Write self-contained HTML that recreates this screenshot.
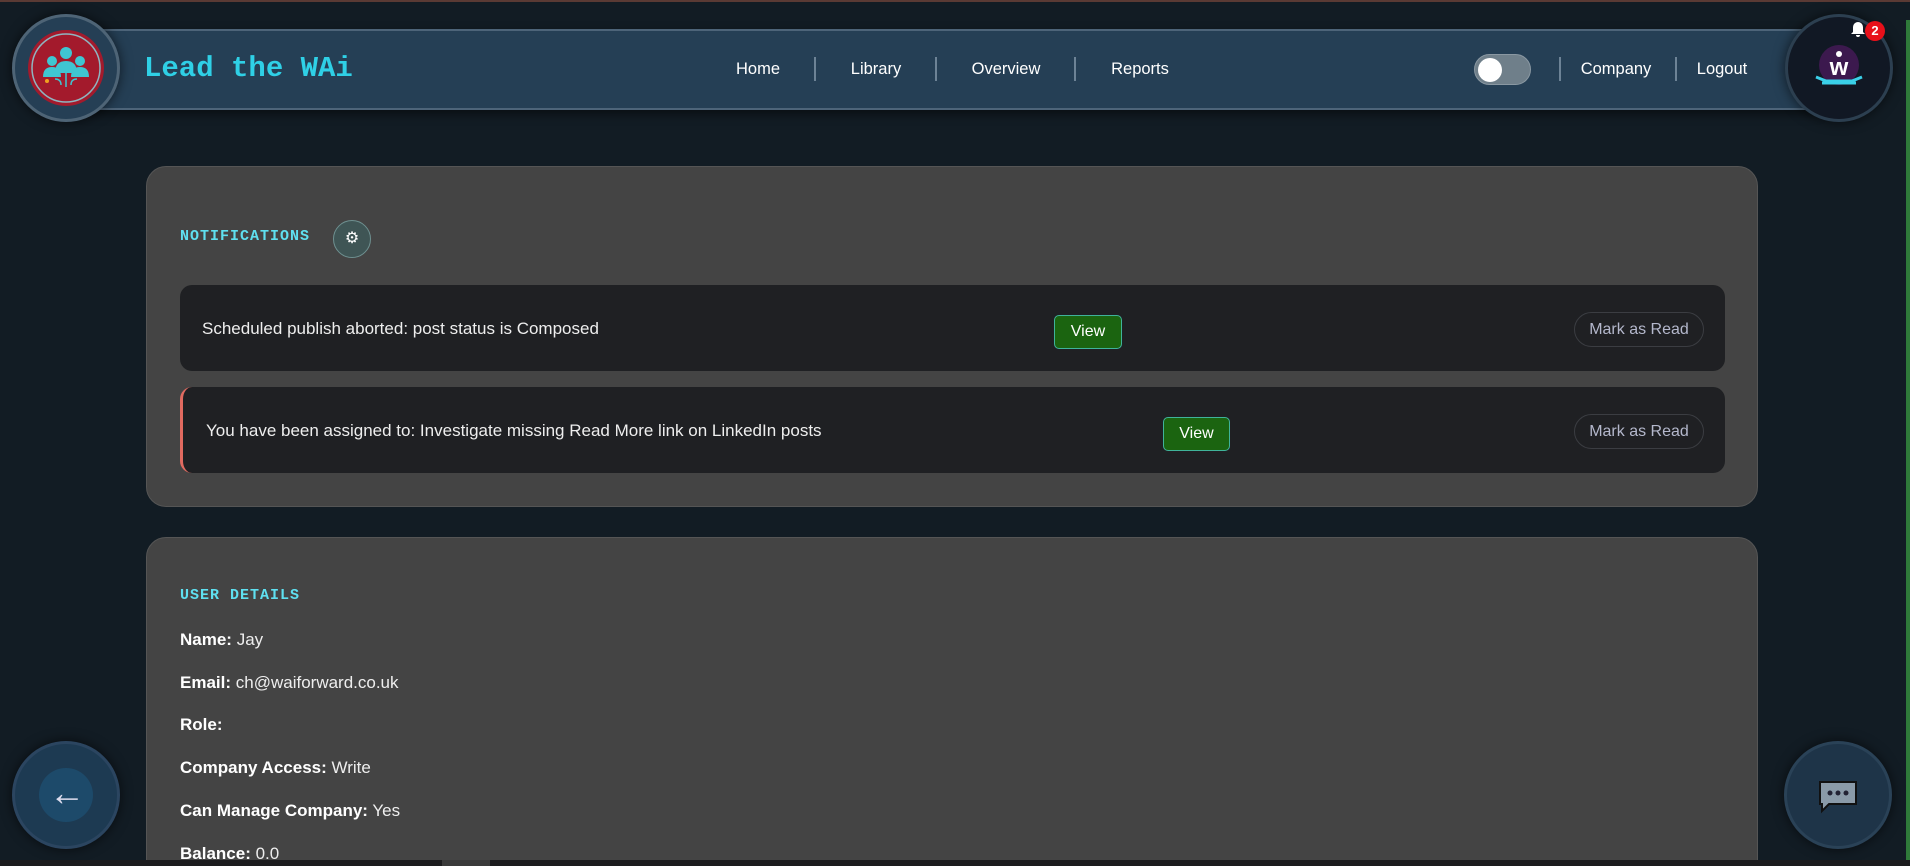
<!DOCTYPE html>
<html style="overflow:hidden;width:1910px;height:866px"><head><meta charset="utf-8"><style>
*{box-sizing:border-box;margin:0;padding:0}
body{width:1910px;height:866px;overflow:hidden;background:#121c24;font-family:"Liberation Sans",Arial,sans-serif;position:relative;color:#eee}
.topline{position:absolute;left:0;top:0;width:1910px;height:2px;background:#5a3a34}
.greenline{position:absolute;right:0;top:20px;width:4px;height:840px;background:#2f7a3a}
.bar{position:absolute;left:80px;top:29px;width:1740px;height:81px;background:#253f55;border:2px solid #4d6479;border-radius:6px;box-shadow:0 4px 10px rgba(0,0,0,.5)}
.circ{position:absolute;width:108px;height:108px;border-radius:50%;background:#253f55;border:3px solid #4e6476;box-shadow:0 0 12px rgba(0,0,0,.6)}
.title{position:absolute;left:144px;top:52px;font-family:"Liberation Mono",monospace;font-weight:bold;font-size:29px;color:#2fd0e6}
.nav{position:absolute;top:60px;font-size:16.5px;color:#fff;transform:translateX(-50%)}
.sep{position:absolute;top:57px;width:2px;height:24px;background:#6d8396}
.toggle{position:absolute;left:1474px;top:54px;width:57px;height:31px;border-radius:16px;background:#6f7f8a;border:1px solid #8a98a2}
.toggle:after{content:"";position:absolute;left:3px;top:3px;width:24px;height:24px;border-radius:50%;background:#fff}
.card{position:absolute;left:146px;width:1612px;background:#444;border-radius:20px;border:1px solid #555;overflow:hidden}
.h{font-family:"Liberation Mono",monospace;font-weight:bold;font-size:15px;color:#5fe0f0;letter-spacing:1px;position:absolute}
.row{position:absolute;left:180px;width:1545px;background:#1f2023;border-radius:12px;height:86px}
.row .t{position:absolute;left:22px;top:33px;font-size:17px;color:#eee}
.view{position:absolute;height:34px;border-radius:5px;background:#1b6410;border:1px solid #3fb39a;color:#fff;font-size:16px;text-align:center;line-height:32px}
.mark{position:absolute;left:1394px;width:130px;height:35px;border-radius:18px;border:1px solid #3b3d42;color:#b4b8cc;font-size:16px;text-align:center;line-height:33px}
.d{position:absolute;left:180px;font-size:17px;color:#eee}
.d b{color:#fff}
</style></head><body>
<div class="topline"></div><div class="greenline"></div>
<div class="bar"></div>
<div class="circ" style="left:12px;top:14px">
<svg width="102" height="102" viewBox="0 0 102 102"><circle cx="51" cy="51" r="38" fill="#a31a2c"/><circle cx="51" cy="51" r="34" fill="none" stroke="#8fb5c0" stroke-width="1.5"/>
<g fill="#3fc6d2"><circle cx="51" cy="36" r="6"/><path d="M40 56q0-12 11-12t11 12z"/><circle cx="37" cy="44" r="5"/><path d="M28 60q0-10 9-10t9 10z"/><circle cx="65" cy="44" r="5"/><path d="M56 60q0-10 9-10t9 10z"/></g>
<path d="M51 56v14M40 62q6 0 6 6M62 62q-6 0-6 6" stroke="#3fc6d2" fill="none" stroke-width="1.5"/><circle cx="32" cy="64" r="2" fill="#f0a020"/></svg></div>
<div class="title">Lead the WAi</div>
<div class="nav" style="left:758px">Home</div><div class="sep" style="left:814px"></div>
<div class="nav" style="left:876px">Library</div><div class="sep" style="left:935px"></div>
<div class="nav" style="left:1006px">Overview</div><div class="sep" style="left:1074px"></div>
<div class="nav" style="left:1140px">Reports</div>
<div class="toggle"></div>
<div class="sep" style="left:1559px"></div>
<div class="nav" style="left:1616px">Company</div><div class="sep" style="left:1675px"></div>
<div class="nav" style="left:1722px">Logout</div>
<div class="circ" style="left:1785px;top:14px;background:#111824;border-color:#2c3f50">
<svg width="102" height="102" viewBox="0 0 102 102"><circle cx="51" cy="48" r="20" fill="#5a1a6a" opacity=".6"/><text x="51" y="58" font-family="Liberation Sans" font-weight="bold" font-size="24" fill="#fff" text-anchor="middle">w</text><circle cx="51" cy="37" r="3" fill="#fff"/><path d="M28 60l10 4h26l10-4M34 66h34" stroke="#3ad0e8" stroke-width="3" fill="none"/></svg></div>
<svg style="position:absolute;left:1850px;top:21px" width="16" height="17" viewBox="0 0 16 17"><path d="M8 1a5 5 0 0 0-5 5v5l-2 2h14l-2-2V6a5 5 0 0 0-5-5zM6 14a2 2 0 0 0 4 0z" fill="#fff"/></svg>
<div style="position:absolute;left:1865px;top:21px;width:20px;height:20px;border-radius:50%;background:#e8101a;color:#fff;font-size:13px;font-weight:bold;text-align:center;line-height:20px">2</div>

<div class="card" style="top:166px;height:341px"></div>
<div class="h" style="left:180px;top:228px">NOTIFICATIONS</div>
<div style="position:absolute;left:333px;top:220px;width:38px;height:38px;border-radius:50%;background:#3f5555;border:1px solid #6e9090;color:#fff;font-size:16px;text-align:center;line-height:36px">&#9881;</div>
<div class="row" style="top:285px"><div class="t" style="top:34px">Scheduled publish aborted: post status is Composed</div>
<div class="view" style="left:874px;top:30px;width:68px">View</div><div class="mark" style="top:27px">Mark as Read</div></div>
<div class="row" style="top:387px;border-left:3px solid #e06a60"><div class="t" style="left:23px;top:34px">You have been assigned to: Investigate missing Read More link on LinkedIn posts</div>
<div class="view" style="left:980px;top:30px;width:67px">View</div><div class="mark" style="left:1391px;top:27px">Mark as Read</div></div>

<div class="card" style="top:537px;height:329px;border-bottom-left-radius:0;border-bottom-right-radius:0"></div>
<div class="h" style="left:180px;top:587px">USER DETAILS</div>
<div class="d" style="top:630px"><b>Name:</b> Jay</div>
<div class="d" style="top:673px"><b>Email:</b> ch@waiforward.co.uk</div>
<div class="d" style="top:715px"><b>Role:</b></div>
<div class="d" style="top:758px"><b>Company Access:</b> Write</div>
<div class="d" style="top:801px"><b>Can Manage Company:</b> Yes</div>
<div class="d" style="top:844px"><b>Balance:</b> 0.0</div>
<div style="position:absolute;left:0;top:860px;width:1910px;height:6px;background:#1c1c1e"></div>
<div style="position:absolute;left:442px;top:860px;width:48px;height:6px;background:#3a3a3a"></div>

<div class="circ" style="left:12px;top:741px;background:#1d3a52;border-color:#2b4560"><div style="position:absolute;left:24px;top:24px;width:54px;height:54px;border-radius:50%;background:#1d4a6a"></div><div style="position:absolute;left:34px;top:28px;color:#dde;font-size:36px">&#8592;</div></div>
<div class="circ" style="left:1784px;top:741px;background:#1e3448;border-color:#2a4257">
<svg width="102" height="102" viewBox="0 0 102 102"><path d="M33 38h36v22H42l-7 7v-7h-2z" fill="#8a9aa8" stroke="#111" stroke-width="2"/><circle cx="43" cy="49" r="2.5" fill="#223"/><circle cx="51" cy="49" r="2.5" fill="#223"/><circle cx="59" cy="49" r="2.5" fill="#223"/></svg></div>
</body></html>
